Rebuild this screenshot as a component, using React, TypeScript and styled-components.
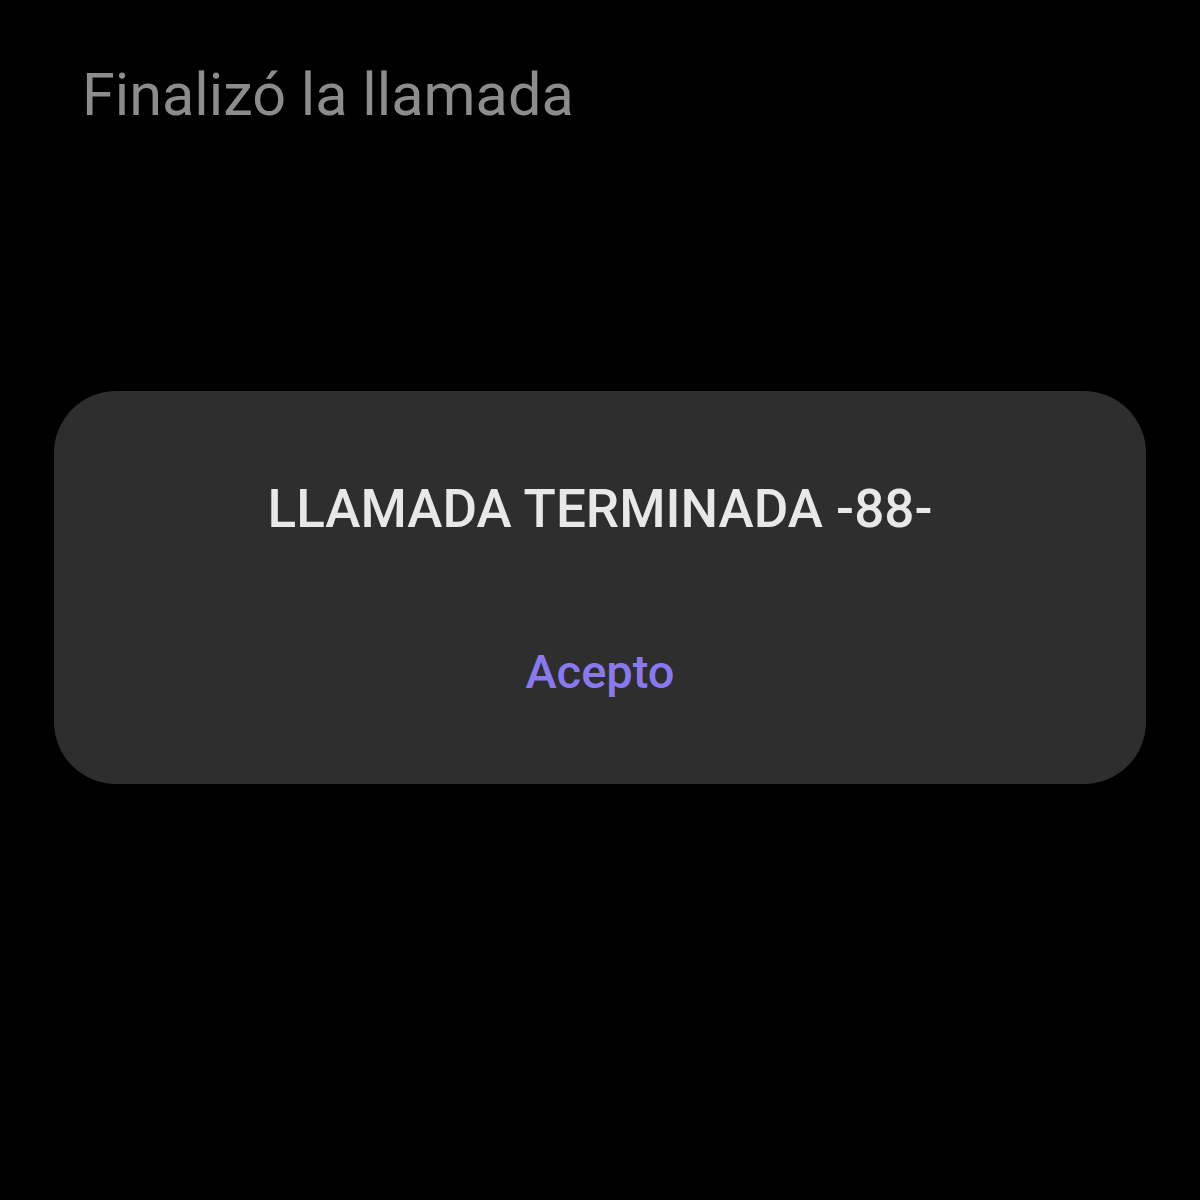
import React from 'react';
import styled, { createGlobalStyle } from 'styled-components';

const GlobalStyle = createGlobalStyle`
  html, body {
    margin: 0;
    padding: 0;
    background: #000000;
  }
  body {
    font-family: Roboto, 'Liberation Sans', sans-serif;
  }
`;

const Screen = styled.div`
  width: 1200px;
  height: 1200px;
  background: #000000;
  display: flex;
  flex-direction: column;
  box-sizing: border-box;
  padding: 0 54px;
`;

const Title = styled.h1`
  margin: 63px 0 0 28px;
  font-family: Roboto, 'Liberation Sans', sans-serif;
  font-weight: 400;
  font-size: 59.4px;
  line-height: 64px;
  color: #8c8c8c;
`;

const Dialog = styled.div`
  margin-top: 264px;
  height: 393px;
  background: #2e2e2e;
  border-radius: 62px;
  display: flex;
  flex-direction: column;
  align-items: center;
  box-sizing: border-box;
  padding-top: 86px;
`;

const Message = styled.div`
  font-family: Roboto, 'Liberation Sans', sans-serif;
  font-weight: 500;
  font-size: 53px;
  line-height: 64px;
  color: #e8e8e8;
`;

const ActionButton = styled.button`
  margin-top: 99px;
  background: none;
  border: none;
  padding: 0;
  font-family: Roboto, 'Liberation Sans', sans-serif;
  font-weight: 500;
  font-size: 47px;
  line-height: 64px;
  color: #8a79ee;
  cursor: pointer;
`;

const App = () => (
  <>
    <GlobalStyle />
    <Screen>
      <Title>Finalizó la llamada</Title>
      <Dialog>
        <Message>LLAMADA TERMINADA -88-</Message>
        <ActionButton>Acepto</ActionButton>
      </Dialog>
    </Screen>
  </>
);

export default App;
